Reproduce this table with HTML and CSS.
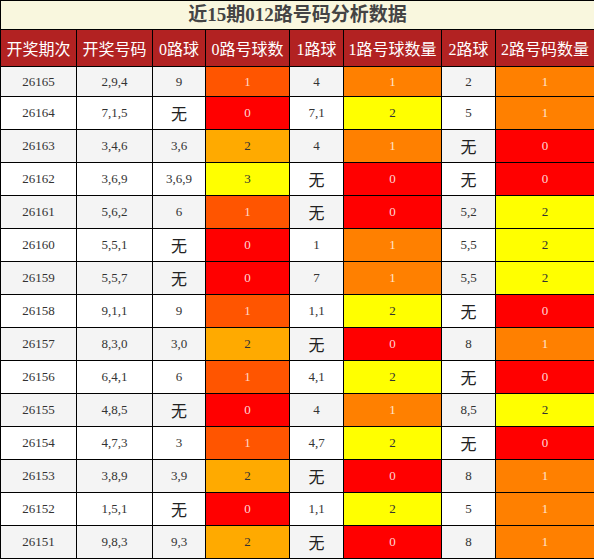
FILE: index.html
```html
<!DOCTYPE html>
<html lang="zh">
<head>
    <meta charset="UTF-8">
    <meta name="viewport" content="width=device-width, initial-scale=1.0">
    <title>近15期012路号码分析数据</title>
    <link rel="stylesheet" href="styles.css">
</head>
<body>
    <table class="road-table">
        <colgroup>
            <col class="w-issue">
            <col class="w-code">
            <col class="w-ball0">
            <col class="w-count0">
            <col class="w-ball">
            <col class="w-count">
            <col class="w-ball">
            <col class="w-last">
        </colgroup>
        <thead>
            <tr>
                <th colspan="8" class="title">近15期012路号码分析数据</th>
            </tr>
            <tr class="head">
                <th>开奖期次</th>
                <th>开奖号码</th>
                <th>0路球</th>
                <th>0路号球数</th>
                <th>1路球</th>
                <th>1路号球数量</th>
                <th>2路球</th>
                <th>2路号码数量</th>
            </tr>
        </thead>
        <tbody>
            <tr class="first"><td>26165</td><td>2,9,4</td><td>9</td><td class="r1">1</td><td>4</td><td class="o1">1</td><td>2</td><td class="o1">1</td></tr>
            <tr><td>26164</td><td>7,1,5</td><td class="none">无</td><td class="z">0</td><td>7,1</td><td class="y">2</td><td>5</td><td class="o1">1</td></tr>
            <tr><td>26163</td><td>3,4,6</td><td>3,6</td><td class="r2">2</td><td>4</td><td class="o1">1</td><td class="none">无</td><td class="z">0</td></tr>
            <tr><td>26162</td><td>3,6,9</td><td>3,6,9</td><td class="y">3</td><td class="none">无</td><td class="z">0</td><td class="none">无</td><td class="z">0</td></tr>
            <tr><td>26161</td><td>5,6,2</td><td>6</td><td class="r1">1</td><td class="none">无</td><td class="z">0</td><td>5,2</td><td class="y">2</td></tr>
            <tr><td>26160</td><td>5,5,1</td><td class="none">无</td><td class="z">0</td><td>1</td><td class="o1">1</td><td>5,5</td><td class="y">2</td></tr>
            <tr><td>26159</td><td>5,5,7</td><td class="none">无</td><td class="z">0</td><td>7</td><td class="o1">1</td><td>5,5</td><td class="y">2</td></tr>
            <tr><td>26158</td><td>9,1,1</td><td>9</td><td class="r1">1</td><td>1,1</td><td class="y">2</td><td class="none">无</td><td class="z">0</td></tr>
            <tr><td>26157</td><td>8,3,0</td><td>3,0</td><td class="r2">2</td><td class="none">无</td><td class="z">0</td><td>8</td><td class="o1">1</td></tr>
            <tr><td>26156</td><td>6,4,1</td><td>6</td><td class="r1">1</td><td>4,1</td><td class="y">2</td><td class="none">无</td><td class="z">0</td></tr>
            <tr><td>26155</td><td>4,8,5</td><td class="none">无</td><td class="z">0</td><td>4</td><td class="o1">1</td><td>8,5</td><td class="y">2</td></tr>
            <tr><td>26154</td><td>4,7,3</td><td>3</td><td class="r1">1</td><td>4,7</td><td class="y">2</td><td class="none">无</td><td class="z">0</td></tr>
            <tr><td>26153</td><td>3,8,9</td><td>3,9</td><td class="r2">2</td><td class="none">无</td><td class="z">0</td><td>8</td><td class="o1">1</td></tr>
            <tr><td>26152</td><td>1,5,1</td><td class="none">无</td><td class="z">0</td><td>1,1</td><td class="y">2</td><td>5</td><td class="o1">1</td></tr>
            <tr><td>26151</td><td>9,8,3</td><td>9,3</td><td class="r2">2</td><td class="none">无</td><td class="z">0</td><td>8</td><td class="o1">1</td></tr>
        </tbody>
    </table>
</body>
</html>
```

FILE: styles.css
```css
body {
    margin: 0;
    background: #ffffff;
    font-family: "Liberation Serif", "Noto Sans CJK SC", serif;
    color: #333;
}
.road-table {
    width: 594px;
    table-layout: fixed;
    border-collapse: collapse;
    font-size: 13px;
}
.w-issue { width: 76px; }
.w-code { width: 76px; }
.w-ball0 { width: 53px; }
.w-ball { width: 54px; }
.w-count0 { width: 84px; }
.w-count { width: 98px; }
.w-last { width: 99px; }
.road-table th,
.road-table td {
    border: 1px solid #000;
    text-align: center;
    padding: 0;
}
.title {
    height: 28px;
    background: #f9f7de;
    color: #444;
    font-family: "Liberation Serif", "Noto Sans CJK SC", serif;
    font-size: 19px;
    font-weight: bold;
    line-height: 26px;
}
.head th {
    height: 36px;
    background: #b22222;
    color: #fff;
    font-weight: normal;
    font-size: 16px;
    font-family: "Liberation Serif", "Noto Sans CJK SC", serif;
}
.road-table td {
    height: 32px;
}
.road-table tr.first td {
    height: 29px;
}
.road-table tbody tr:nth-child(odd) {
    background: #f4f4f4;
}
.road-table tbody tr:nth-child(even) {
    background: #ffffff;
}
.road-table td.none {
    font-size: 16px;
    font-family: "Noto Sans CJK SC", sans-serif;
    color: #222;
}
.road-table td.z {
    background: #ff0000;
    color: #ffd6d6;
}
.road-table td.r1 {
    background: #ff5500;
    color: #ffd6c4;
}
.road-table td.o1 {
    background: #ff8000;
    color: #ffe4cc;
}
.road-table td.r2 {
    background: #ffaa00;
    color: #333;
}
.road-table td.y {
    background: #ffff00;
    color: #333;
}
```
